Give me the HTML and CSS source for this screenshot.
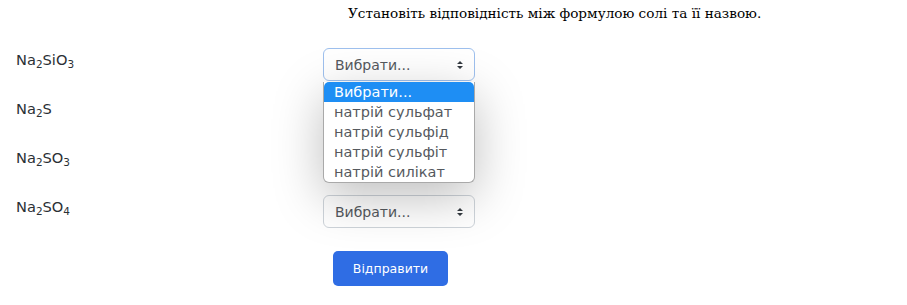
FILE: index.html
```html
<!DOCTYPE html>
<html lang="uk">
<head>
<meta charset="utf-8">
<link rel="stylesheet" href="styles.css">
</head>
<body>
<div class="page">
  <p class="title">Установіть відповідність між формулою солі та її назвою.</p>
  <div class="rows">
    <div class="row">
      <div class="label">Na<sub>2</sub>SiO<sub>3</sub></div>
      <div class="field">
        <div class="select focus"><span>Вибрати...</span><svg class="arrows" width="8" height="10" viewBox="0 0 8 10"><path d="M4 1 L7 4 H1 Z M4 9 L7 6 H1 Z" fill="#343a40"/></svg></div>
        <ul class="dropdown">
          <li class="sel">Вибрати...</li>
          <li>натрій сульфат</li>
          <li>натрій сульфід</li>
          <li>натрій сульфіт</li>
          <li>натрій силікат</li>
        </ul>
      </div>
    </div>
    <div class="row">
      <div class="label">Na<sub>2</sub>S</div>
      <div class="field">
        <div class="select covered"><span>Вибрати...</span></div>
      </div>
    </div>
    <div class="row">
      <div class="label">Na<sub>2</sub>SO<sub>3</sub></div>
      <div class="field">
        <div class="select covered"><span>Вибрати...</span></div>
      </div>
    </div>
    <div class="row">
      <div class="label">Na<sub>2</sub>SO<sub>4</sub></div>
      <div class="field">
        <div class="select"><span>Вибрати...</span><svg class="arrows" width="8" height="10" viewBox="0 0 8 10"><path d="M4 1 L7 4 H1 Z M4 9 L7 6 H1 Z" fill="#343a40"/></svg></div>
      </div>
    </div>
  </div>
  <div class="actions">
    <button class="btn">Відправити</button>
  </div>
</div>
</body>
</html>
```
FILE: styles.css
```css
html, body {
  margin: 0;
  padding: 0;
  background: #fff;
}
.page {
  padding: 0 16px;
  font-family: "DejaVu Sans", sans-serif;
  color: #1d2125;
}
.title {
  margin: 0;
  padding: 3px 0 0 332px;
  height: 48px;
  box-sizing: border-box;
  font-family: "DejaVu Serif", serif;
  font-size: 13.6px;
  line-height: 20px;
  color: #000;
}
.rows {
  display: flex;
  flex-direction: column;
  gap: 15px;
}
.row {
  display: grid;
  grid-template-columns: 307px 152px;
  height: 34px;
}
.label {
  font-size: 14.6px;
  line-height: 24px;
  color: #2b3035;
}
.label sub {
  font-size: 10.5px;
  vertical-align: -3px;
  line-height: 0;
}
.field {
  position: relative;
}
.select {
  box-sizing: border-box;
  height: 33px;
  border: 1px solid #ced4da;
  border-radius: 6px;
  background: #fff;
  display: flex;
  align-items: center;
  justify-content: space-between;
  padding: 0 10px 0 11px;
  font-size: 14px;
  color: #55595e;
}
.select.covered span {
  visibility: hidden;
}
.select.focus {
  border-color: #9ec0ee;
}
.arrows {
  display: block;
}
.dropdown {
  position: absolute;
  z-index: 2;
  left: 0;
  top: 34px;
  width: 152px;
  box-sizing: border-box;
  margin: 0;
  padding: 0;
  list-style: none;
  background: #fff;
  border: 1px solid #a9a9a9;
  border-top: none;
  border-radius: 0 0 6px 6px;
  box-shadow: 0 14px 50px rgba(0, 0, 0, 0.26);
  overflow: hidden;
  font-size: 14.5px;
}
.dropdown li {
  height: 20px;
  line-height: 20px;
  padding-left: 10px;
  color: #55595e;
}
.dropdown li.sel {
  background: #1e8ef4;
  color: #fff;
  border-radius: 5px 5px 0 0;
}
.actions {
  padding: 22px 0 0 317px;
}
.btn {
  width: 115px;
  height: 35px;
  border: none;
  border-radius: 5px;
  background: #2f6de4;
  color: #fff;
  font-family: "DejaVu Sans", sans-serif;
  font-size: 12.5px;
}
```
